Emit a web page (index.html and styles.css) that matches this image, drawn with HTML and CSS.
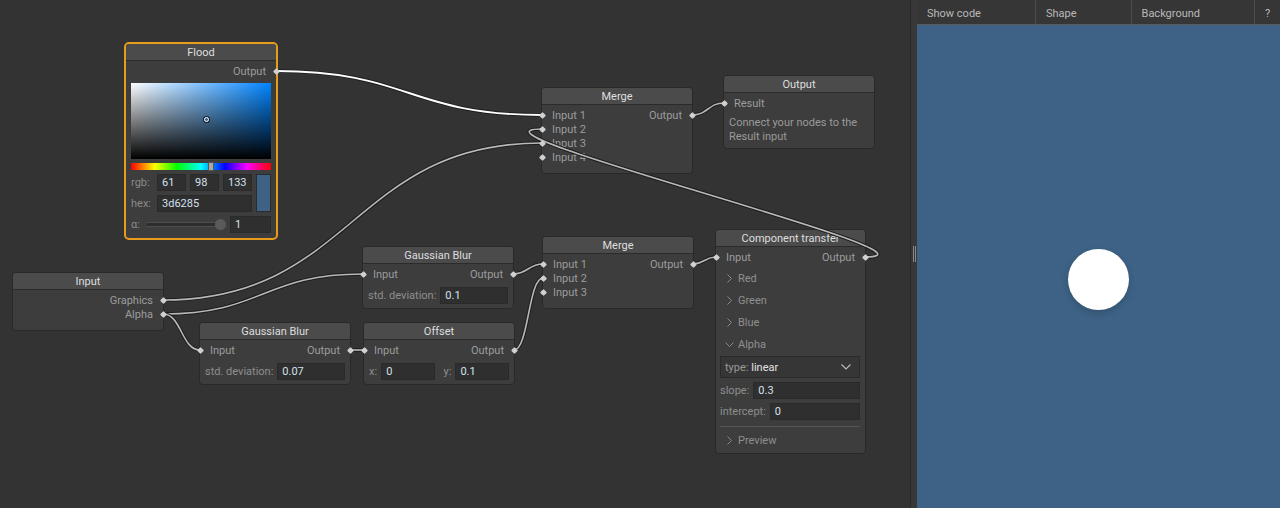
FILE: index.html
```html
<!DOCTYPE html>
<html>
<head>
<meta charset="utf-8">
<link rel="stylesheet" href="styles.css">
</head>
<body>
<div class="app">
  <div class="editor">
    <svg class="wires" width="910" height="508" viewBox="0 0 910 508">
      <path class="wire-bg" d="M163 300 C353 300 352 143 542 143"/>
      <path class="wire" d="M163 300 C353 300 352 143 542 143"/>
      <path class="wire-bg" d="M163 314 C263 314 263 274 363 274"/>
      <path class="wire" d="M163 314 C263 314 263 274 363 274"/>
      <path class="wire-bg" d="M163 314 C181.5 314 181.5 350 200 350"/>
      <path class="wire" d="M163 314 C181.5 314 181.5 350 200 350"/>
      <path class="wire-bg" d="M350 350 L364 350"/>
      <path class="wire" d="M350 350 L364 350"/>
      <path class="wire-bg" d="M513 274 C528 274 528 264 543 264"/>
      <path class="wire" d="M513 274 C528 274 528 264 543 264"/>
      <path class="wire-bg" d="M514 350 C528.5 350 528.5 278 543 278"/>
      <path class="wire" d="M514 350 C528.5 350 528.5 278 543 278"/>
      <path class="wire-bg" d="M693 264 C704.5 264 704.5 257 716 257"/>
      <path class="wire" d="M693 264 C704.5 264 704.5 257 716 257"/>
      <path class="wire-bg" d="M692 115 C708 115 708 103 724 103"/>
      <path class="wire" d="M692 115 C708 115 708 103 724 103"/>
      <path class="wire-bg" d="M865 257 C965 257 442 129 542 129"/>
      <path class="wire" d="M865 257 C965 257 442 129 542 129"/>
      <path class="wire-bg" d="M276 71 C409 71 409 115 542 115"/>
      <path class="wire sel" d="M276 71 C409 71 409 115 542 115"/>
    </svg>

    <!-- Flood -->
    <div class="node flood n-flood">
      <div class="node-title">Flood</div>
      <div class="node-body flood-body">
        <div class="row"><span></span><span>Output</span><i class="port out"></i></div>
        <div class="picker-wrap">
          <div class="sv"><span class="sv-marker"></span></div>
          <div class="hue"><span class="hue-handle"></span></div>
          <div class="fields">
            <div class="fields-col">
              <div class="frow">
                <span class="flabel">rgb:</span>
                <span class="inp">61</span>
                <span class="inp">98</span>
                <span class="inp">133</span>
              </div>
              <div class="frow">
                <span class="flabel">hex:</span>
                <span class="inp">3d6285</span>
              </div>
            </div>
            <div class="swatch"></div>
          </div>
          <div class="frow alpha-row">
            <span class="alabel">α:</span>
            <div class="slider"><span class="track"></span><span class="knob"></span></div>
            <span class="inp alpha-inp">1</span>
          </div>
        </div>
      </div>
    </div>

    <!-- Merge 1 -->
    <div class="node n-merge1">
      <div class="node-title">Merge</div>
      <div class="node-body">
        <div class="row"><i class="port in"></i><span>Input 1</span><span>Output</span><i class="port out"></i></div>
        <div class="row"><i class="port in"></i><span>Input 2</span></div>
        <div class="row"><i class="port in"></i><span>Input 3</span></div>
        <div class="row"><i class="port in"></i><span>Input 4</span></div>
      </div>
    </div>

    <!-- Output -->
    <div class="node n-output">
      <div class="node-title">Output</div>
      <div class="node-body out-body">
        <div class="row"><i class="port in"></i><span>Result</span></div>
        <p class="desc">Connect your nodes to the Result input</p>
      </div>
    </div>

    <!-- Input -->
    <div class="node n-input">
      <div class="node-title">Input</div>
      <div class="node-body">
        <div class="row"><span></span><span>Graphics</span><i class="port out"></i></div>
        <div class="row"><span></span><span>Alpha</span><i class="port out"></i></div>
      </div>
    </div>

    <!-- Gaussian Blur upper -->
    <div class="node n-gb2">
      <div class="node-title">Gaussian Blur</div>
      <div class="node-body field-body">
        <div class="row"><i class="port in"></i><span>Input</span><span>Output</span><i class="port out"></i></div>
        <div class="field"><span class="label">std. deviation:</span><span class="inp">0.1</span></div>
      </div>
    </div>

    <!-- Gaussian Blur lower -->
    <div class="node n-gb1">
      <div class="node-title">Gaussian Blur</div>
      <div class="node-body field-body">
        <div class="row"><i class="port in"></i><span>Input</span><span>Output</span><i class="port out"></i></div>
        <div class="field"><span class="label">std. deviation:</span><span class="inp">0.07</span></div>
      </div>
    </div>

    <!-- Offset -->
    <div class="node n-offset">
      <div class="node-title">Offset</div>
      <div class="node-body field-body">
        <div class="row"><i class="port in"></i><span>Input</span><span>Output</span><i class="port out"></i></div>
        <div class="field pair">
          <div class="half"><span class="label">x:</span><span class="inp">0</span></div>
          <div class="half"><span class="label">y:</span><span class="inp">0.1</span></div>
        </div>
      </div>
    </div>

    <!-- Merge 2 -->
    <div class="node n-merge2">
      <div class="node-title">Merge</div>
      <div class="node-body">
        <div class="row"><i class="port in"></i><span>Input 1</span><span>Output</span><i class="port out"></i></div>
        <div class="row"><i class="port in"></i><span>Input 2</span></div>
        <div class="row"><i class="port in"></i><span>Input 3</span></div>
      </div>
    </div>

    <!-- Component transfer -->
    <div class="node n-ct">
      <div class="node-title">Component transfer</div>
      <div class="node-body ct-body">
        <div class="row"><i class="port in"></i><span>Input</span><span>Output</span><i class="port out"></i></div>
        <div class="sections">
          <div class="section"><svg class="chev" width="5" height="9" viewBox="0 0 5 9"><path d="M0.5 0.5 L4.5 4.5 L0.5 8.5"/></svg><span>Red</span></div>
          <div class="section"><svg class="chev" width="5" height="9" viewBox="0 0 5 9"><path d="M0.5 0.5 L4.5 4.5 L0.5 8.5"/></svg><span>Green</span></div>
          <div class="section"><svg class="chev" width="5" height="9" viewBox="0 0 5 9"><path d="M0.5 0.5 L4.5 4.5 L0.5 8.5"/></svg><span>Blue</span></div>
          <div class="section"><svg class="chev chev-down" width="9" height="5" viewBox="0 0 9 5"><path d="M0.5 0.5 L4.5 4.5 L8.5 0.5"/></svg><span>Alpha</span></div>
        </div>
        <div class="select"><span><span class="label">type:</span> <span class="val">linear</span></span><svg class="sel-chev" width="10" height="6" viewBox="0 0 10 6"><path d="M0.5 0.5 L5 5 L9.5 0.5"/></svg></div>
        <div class="field ct-field"><span class="label">slope:</span><span class="inp">0.3</span></div>
        <div class="field ct-field"><span class="label">intercept:</span><span class="inp">0</span></div>
        <div class="sep"></div>
        <div class="section"><svg class="chev" width="5" height="9" viewBox="0 0 5 9"><path d="M0.5 0.5 L4.5 4.5 L0.5 8.5"/></svg><span>Preview</span></div>
      </div>
    </div>
  </div>

  <div class="splitter"><span class="grip"></span></div>

  <div class="preview">
    <div class="toolbar">
      <div class="tool">Show code</div>
      <div class="tool">Shape</div>
      <div class="tool">Background</div>
      <div class="tool help">?</div>
    </div>
    <div class="stage"><div class="shape"></div></div>
  </div>
</div>
</body>
</html>
```

FILE: styles.css
```css
html, body {
  margin: 0;
  padding: 0;
  background: #333333;
  font-family: Roboto, "Liberation Sans", Arial, sans-serif;
  font-size: 11px;
  overflow: hidden;
}

.app {
  display: flex;
  height: 508px;
}

/* ---------- node editor ---------- */
.editor {
  position: relative;
  width: 910px;
  flex: none;
  background: #333333;
  overflow: hidden;
}

.wires {
  position: absolute;
  left: 0;
  top: 0;
  z-index: 2;
  pointer-events: none;
}

.wire-bg {
  fill: none;
  stroke: #1d1d1d;
  stroke-width: 3.6;
}

.wire {
  fill: none;
  stroke: #b8b8b8;
  stroke-width: 1.6;
}

.wire.sel {
  stroke: #ffffff;
  stroke-width: 1.9;
}

.node {
  position: absolute;
  box-sizing: border-box;
  width: 152px;
  background: #3d3d3d;
  border: 1px solid #292929;
  border-radius: 4px;
  color: #9c9c9c;
}

.node-title {
  height: 16px;
  line-height: 18px;
  text-align: center;
  color: #dedede;
  background: #4b4b4b;
  border-bottom: 1px solid #2b2b2b;
  border-radius: 3px 3px 0 0;
  overflow: hidden;
}

.node-body {
  padding: 3px 0 9px;
}

.row {
  position: relative;
  height: 14px;
  line-height: 16px;
  display: flex;
  justify-content: space-between;
  padding: 0 10px;
  white-space: nowrap;
}

.port {
  position: absolute;
  top: 4.5px;
  width: 5px;
  height: 5px;
  background: #d0d0d0;
  border-radius: 1px;
  transform: rotate(45deg);
  z-index: 3;
}

.port.in { left: -2.5px; }
.port.out { right: -2.5px; }

/* node positions on the canvas */
.n-flood  { left: 124px; top: 42px; }
.n-merge1 { left: 541px; top: 87px; }
.n-output { left: 723px; top: 75px; }
.n-input  { left: 12px;  top: 272px; }
.n-gb2    { left: 362px; top: 246px; }
.n-gb1    { left: 199px; top: 322px; }
.n-offset { left: 363px; top: 322px; }
.n-merge2 { left: 542px; top: 236px; }
.n-ct     { left: 715px; top: 229px; width: 151px; }

/* inputs */
.inp {
  box-sizing: border-box;
  flex: 1;
  min-width: 0;
  height: 17px;
  line-height: 16px;
  padding: 0 4px;
  background: #2f2f2f;
  border: 1px solid #2a2a2a;
  color: #d3e0ee;
  white-space: nowrap;
  overflow: hidden;
}

.label {
  color: #8e8e8e;
  white-space: nowrap;
}

/* ---------- flood ---------- */
.flood {
  width: 154px;
  border: 2px solid #e89c1c;
  border-radius: 5px;
}

.flood-body {
  padding: 3px 0 5px;
}

.picker-wrap {
  padding: 0 5px;
}

.sv {
  position: relative;
  margin-top: 5px;
  height: 76px;
  background:
    linear-gradient(to top, #000 0%, rgba(0, 0, 0, 0) 100%),
    linear-gradient(to right, #ffffff 0%, hsl(209, 100%, 50%) 100%);
}

.sv-marker {
  position: absolute;
  left: 73px;
  top: 34px;
  width: 3px;
  height: 3px;
  border: 1.5px solid #ffffff;
  border-radius: 50%;
  box-shadow: 0 0 0 1px rgba(0, 0, 0, 0.7);
}

.hue {
  position: relative;
  margin-top: 4px;
  height: 7px;
  background: linear-gradient(to right, #ff0000 0%, #ffff00 17%, #00ff00 33%, #00ffff 50%, #0000ff 67%, #ff00ff 83%, #ff0000 100%);
}

.hue-handle {
  position: absolute;
  left: 77px;
  top: -1px;
  box-sizing: border-box;
  width: 6px;
  height: 9px;
  background: #a9a9a9;
  border: 1px solid #555;
}

.fields {
  display: flex;
  gap: 4px;
  margin-top: 4px;
}

.fields-col {
  flex: 1;
  display: flex;
  flex-direction: column;
  gap: 4px;
}

.frow {
  display: flex;
  align-items: center;
  gap: 4px;
  height: 17px;
}

.flabel {
  width: 22px;
  flex: none;
  color: #8a8a8a;
}

.swatch {
  box-sizing: border-box;
  width: 15px;
  height: 38px;
  background: #3d6285;
  border: 1px solid #2c2c2c;
}

.alpha-row {
  margin-top: 4px;
}

.alabel {
  width: 10px;
  flex: none;
  color: #8a8a8a;
}

.slider {
  flex: 1;
  display: flex;
  align-items: center;
  height: 11px;
}

.track {
  flex: 1;
  height: 5px;
  box-sizing: border-box;
  border-radius: 3px;
  background: #2d2d2d;
  border: 1px solid #4e4e4e;
}

.knob {
  width: 11px;
  height: 11px;
  flex: none;
  margin-left: -5px;
  border-radius: 50%;
  background: #5a5a5a;
}

.alpha-inp {
  flex: none;
  width: 41px;
}

/* ---------- output node ---------- */
.out-body {
  padding-bottom: 4px;
}

.desc {
  margin: 0;
  padding: 6px 5px 0;
  height: 28px;
  line-height: 14px;
  color: #9a9a9a;
}

/* ---------- fields ---------- */
.field-body {
  padding-bottom: 4px;
}

.field {
  display: flex;
  align-items: center;
  gap: 4px;
  margin: 6px 5px 0;
  height: 17px;
}

.pair {
  gap: 9px;
}

.half {
  flex: 1;
  display: flex;
  align-items: center;
  gap: 4px;
}

/* ---------- component transfer ---------- */
.ct-body {
  padding: 3px 0 2px;
}

.sections {
  margin-top: 3px;
}

.section {
  height: 22px;
  display: flex;
  align-items: center;
  padding-left: 11px;
  gap: 6px;
  color: #8f8f8f;
}

.chev {
  flex: none;
  fill: none;
  stroke: #8a8a8a;
  stroke-width: 1;
}

.chev-down {
  margin-left: -2px;
  margin-right: -2px;
}

.select {
  box-sizing: border-box;
  height: 22px;
  margin: 1px 5px 0 4px;
  padding: 0 8px 0 4px;
  display: flex;
  align-items: center;
  justify-content: space-between;
  background: #363636;
  border: 1px solid #2a2a2a;
}

.select .label {
  color: #999;
}

.select .val {
  color: #e2e2e2;
}

.sel-chev {
  fill: none;
  stroke: #bdbdbd;
  stroke-width: 1.1;
}

.ct-field {
  margin: 4px 5px 0 4px;
}

.sep {
  height: 1px;
  margin: 6px 5px 2px 4px;
  background: #555555;
}

/* ---------- splitter ---------- */
.splitter {
  width: 6px;
  flex: none;
  background: #383838;
  border-left: 1px solid #2a2a2a;
  display: flex;
  align-items: center;
  justify-content: center;
}

.grip {
  width: 1px;
  height: 16px;
  border-left: 1px solid #8a8a8a;
  border-right: 1px solid #8a8a8a;
}

/* ---------- preview ---------- */
.preview {
  flex: 1;
  display: flex;
  flex-direction: column;
  min-width: 0;
}

.toolbar {
  height: 24px;
  flex: none;
  display: flex;
  background: #363636;
  border-bottom: 1px solid #5a5a5a;
}

.tool {
  box-sizing: border-box;
  height: 24px;
  padding: 3px 54px 0 10px;
  line-height: 21px;
  color: #b9b9b9;
  border-right: 1px solid #4c4c4c;
  white-space: nowrap;
}

.tool.help {
  padding: 3px 10px 0;
  border-right: none;
}

.stage {
  flex: 1;
  background: #3d6285;
  display: flex;
  align-items: center;
  justify-content: center;
  padding-top: 25px;
}

.shape {
  width: 61px;
  height: 61px;
  border-radius: 50%;
  background: #ffffff;
  box-shadow: 0 3px 7px rgba(0, 0, 0, 0.16);
}
```
